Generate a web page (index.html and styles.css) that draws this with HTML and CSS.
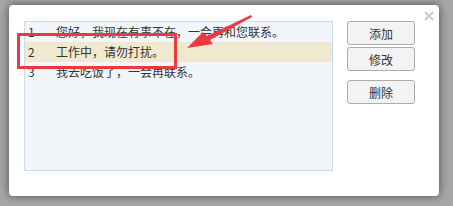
FILE: index.html
```html
<!DOCTYPE html>
<html lang="zh-CN">
<head>
  <meta charset="UTF-8" />
  <title>自动回复</title>
  <link rel="stylesheet" href="styles.css">
</head>
<body>
  <div class="dialog">
    <svg class="close" width="10" height="10" viewBox="0 0 10 10">
      <path d="M1 1 L9 9 M9 1 L1 9" stroke="#c6c6c6" stroke-width="1.8" />
    </svg>
    <div class="content">
      <ul class="reply-list">
        <li><span class="num">1</span><span>您好，我现在有事不在，一会再和您联系。</span></li>
        <li class="selected"><span class="num">2</span><span>工作中，请勿打扰。</span></li>
        <li><span class="num">3</span><span>我去吃饭了，一会再联系。</span></li>
      </ul>
      <div class="actions">
        <button class="btn">添加</button>
        <button class="btn">修改</button>
        <button class="btn btn-gap">删除</button>
      </div>
    </div>
    <div class="mark"></div>
    <svg class="arrow" width="80" height="40" viewBox="0 0 80 40">
      <!-- tip at left, tail at top right -->
      <polygon points="2,33 18,17 22,21 66,0 67,2 25,25 28,29" fill="#ea3a3f" />
    </svg>
  </div>
</body>
</html>
```

FILE: styles.css
```css
body {
  margin: 0;
  padding: 5px 0 0 9px;
  background: #a6a6a6;
  font-family: "Noto Sans CJK SC", "Microsoft YaHei", sans-serif;
  font-size: 12px;
  color: #333;
  height: 206px;
  box-sizing: border-box;
  overflow: hidden;
}
.dialog {
  position: relative;
  width: 430px;
  height: 191px;
  background: white;
  border-radius: 4px;
  box-shadow: 0 0 10px rgba(0, 0, 0, 0.55);
}
.close {
  position: absolute;
  top: 6px;
  left: 415px;
}
.content {
  display: flex;
  padding: 16px 0 0 15px;
}
.reply-list {
  list-style: none;
  margin: 0;
  padding: 0;
  width: 307px;
  height: 148px;
  background: #f2f6fb;
  border: 1px solid #c9dbe9;
}
.reply-list li {
  display: flex;
  height: 20px;
  line-height: 20px;
  padding-left: 3px;
}
.reply-list .num {
  width: 28px;
}
.reply-list li.selected {
  background: #f1e9cf;
}
.actions {
  display: flex;
  flex-direction: column;
  margin-left: 14px;
}
.btn {
  width: 68px;
  height: 24px;
  margin-bottom: 2px;
  padding: 0;
  background: #f3f3f3;
  border: 1px solid #ababab;
  border-radius: 3px;
  font-family: inherit;
  font-size: 12px;
  color: #333;
}
.btn-gap {
  margin-top: 7px;
}
.mark {
  position: absolute;
  left: 8px;
  top: 28px;
  width: 154px;
  height: 30px;
  border: 3px solid #ea3a3f;
}
.arrow {
  position: absolute;
  left: 176px;
  top: 10px;
}
```
